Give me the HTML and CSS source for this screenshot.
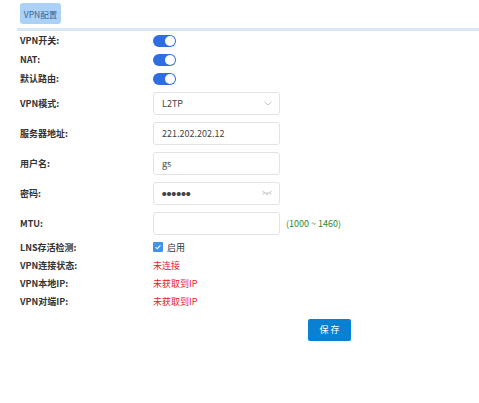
FILE: index.html
```html
<!DOCTYPE html>
<html>
<head>
<meta charset="utf-8">
<link rel="stylesheet" href="styles.css">
</head>
<body>
<div class="header">
  <div class="tab">VPN配置</div>
</div>
<div class="divider"></div>
<div class="form">
  <div class="row r19"><div class="label">VPN开关:</div><div class="toggle"><span class="knob"></span></div></div>
  <div class="row r19"><div class="label">NAT:</div><div class="toggle"><span class="knob"></span></div></div>
  <div class="row r19"><div class="label">默认路由:</div><div class="toggle"><span class="knob"></span></div></div>
  <div class="row r30"><div class="label">VPN模式:</div>
    <div class="box"><span class="val">L2TP</span>
      <svg class="ico" width="8" height="5" viewBox="0 0 8 5"><path d="M0.5 0.8 L4 4 L7.5 0.8" fill="none" stroke="#bdbdbd" stroke-width="0.9"/></svg>
    </div>
  </div>
  <div class="row r30"><div class="label">服务器地址:</div><div class="box"><span class="val">221.202.202.12</span></div></div>
  <div class="row r30"><div class="label">用户名:</div><div class="box"><span class="val">gs</span></div></div>
  <div class="row r30"><div class="label">密码:</div>
    <div class="box"><span class="val dots">●●●●●●</span>
      <svg class="ico" width="10" height="6" viewBox="0 0 10 6"><path d="M0.5 1.2 Q5 5.5 9.5 1.2 M2.2 3 L1.2 4.6 M5 3.9 L5 5.6 M7.8 3 L8.8 4.6" fill="none" stroke="#b5b5b5" stroke-width="0.9"/></svg>
    </div>
  </div>
  <div class="row r30"><div class="label">MTU:</div><div class="box"></div><span class="hint">(1000 ~ 1460)</span></div>
  <div class="row r18"><div class="label">LNS存活检测:</div>
    <span class="check"><svg width="10" height="10" viewBox="0 0 10 10"><path d="M2.6 5.2 L4.3 6.8 L7.4 3.4" fill="none" stroke="#fff" stroke-width="1.1"/></svg></span><span class="checktext">启用</span>
  </div>
  <div class="row r18"><div class="label">VPN连接状态:</div><span class="red">未连接</span></div>
  <div class="row r18"><div class="label">VPN本地IP:</div><span class="red">未获取到IP</span></div>
  <div class="row r18"><div class="label">VPN对端IP:</div><span class="red">未获取到IP</span></div>
  <div class="actions"><button class="save">保 存</button></div>
</div>
</body>
</html>
```
FILE: styles.css
```css
html, body {
  margin: 0;
  padding: 0;
  background: #fff;
  font-family: "Noto Sans CJK SC", "Liberation Sans", sans-serif;
  color: #333;
}
.header {
  height: 28px;
  padding-left: 20px;
  padding-top: 3px;
  box-sizing: border-box;
}
.tab {
  width: 41px;
  height: 21px;
  background: #abd1f6;
  border-radius: 3px;
  font-size: 8.5px;
  color: #3b6494;
  display: flex;
  align-items: center;
  justify-content: center;
}
.divider {
  margin-left: 17px;
  height: 3px;
  background: #dbe7f4;
}
.form {
  padding-left: 20px;
}
.row {
  display: flex;
  align-items: center;
}
.r19 { height: 19px; }
.r30 { height: 30px; }
.r18 { height: 18px; }
.label {
  width: 133px;
  font-size: 9px;
  font-weight: 700;
  color: #333;
  flex: none;
}
.toggle {
  width: 23px;
  height: 12px;
  border-radius: 6px;
  background: #2f6ee0;
  position: relative;
}
.knob {
  position: absolute;
  right: 1px;
  top: 1px;
  width: 10px;
  height: 10px;
  border-radius: 50%;
  background: #fff;
}
.box {
  width: 127px;
  height: 23px;
  box-sizing: border-box;
  border: 1px solid #e3e3e3;
  border-radius: 3px;
  display: flex;
  align-items: center;
  padding: 0 7px 0 8px;
  font-size: 9px;
  color: #444;
  flex: none;
}
.val { flex: 1; }
.dots { font-size: 4.5px; letter-spacing: 0.3px; color: #444; }
.hint {
  margin-left: 6px;
  font-size: 9px;
  color: #2a8a2a;
}
.check {
  width: 10px;
  height: 10px;
  background: #4294ea;
  border-radius: 1px;
  display: flex;
}
.checktext {
  margin-left: 4px;
  font-size: 9px;
  color: #333;
}
.red {
  font-size: 9px;
  color: #e3202b;
}
.actions {
  padding-left: 288px;
  padding-top: 4px;
}
.save {
  width: 43px;
  height: 22px;
  border: none;
  border-radius: 2px;
  background: #0a80d2;
  color: #fff;
  font-family: "Noto Sans CJK SC", sans-serif;
  font-size: 9px;
  padding: 0;
}
```
